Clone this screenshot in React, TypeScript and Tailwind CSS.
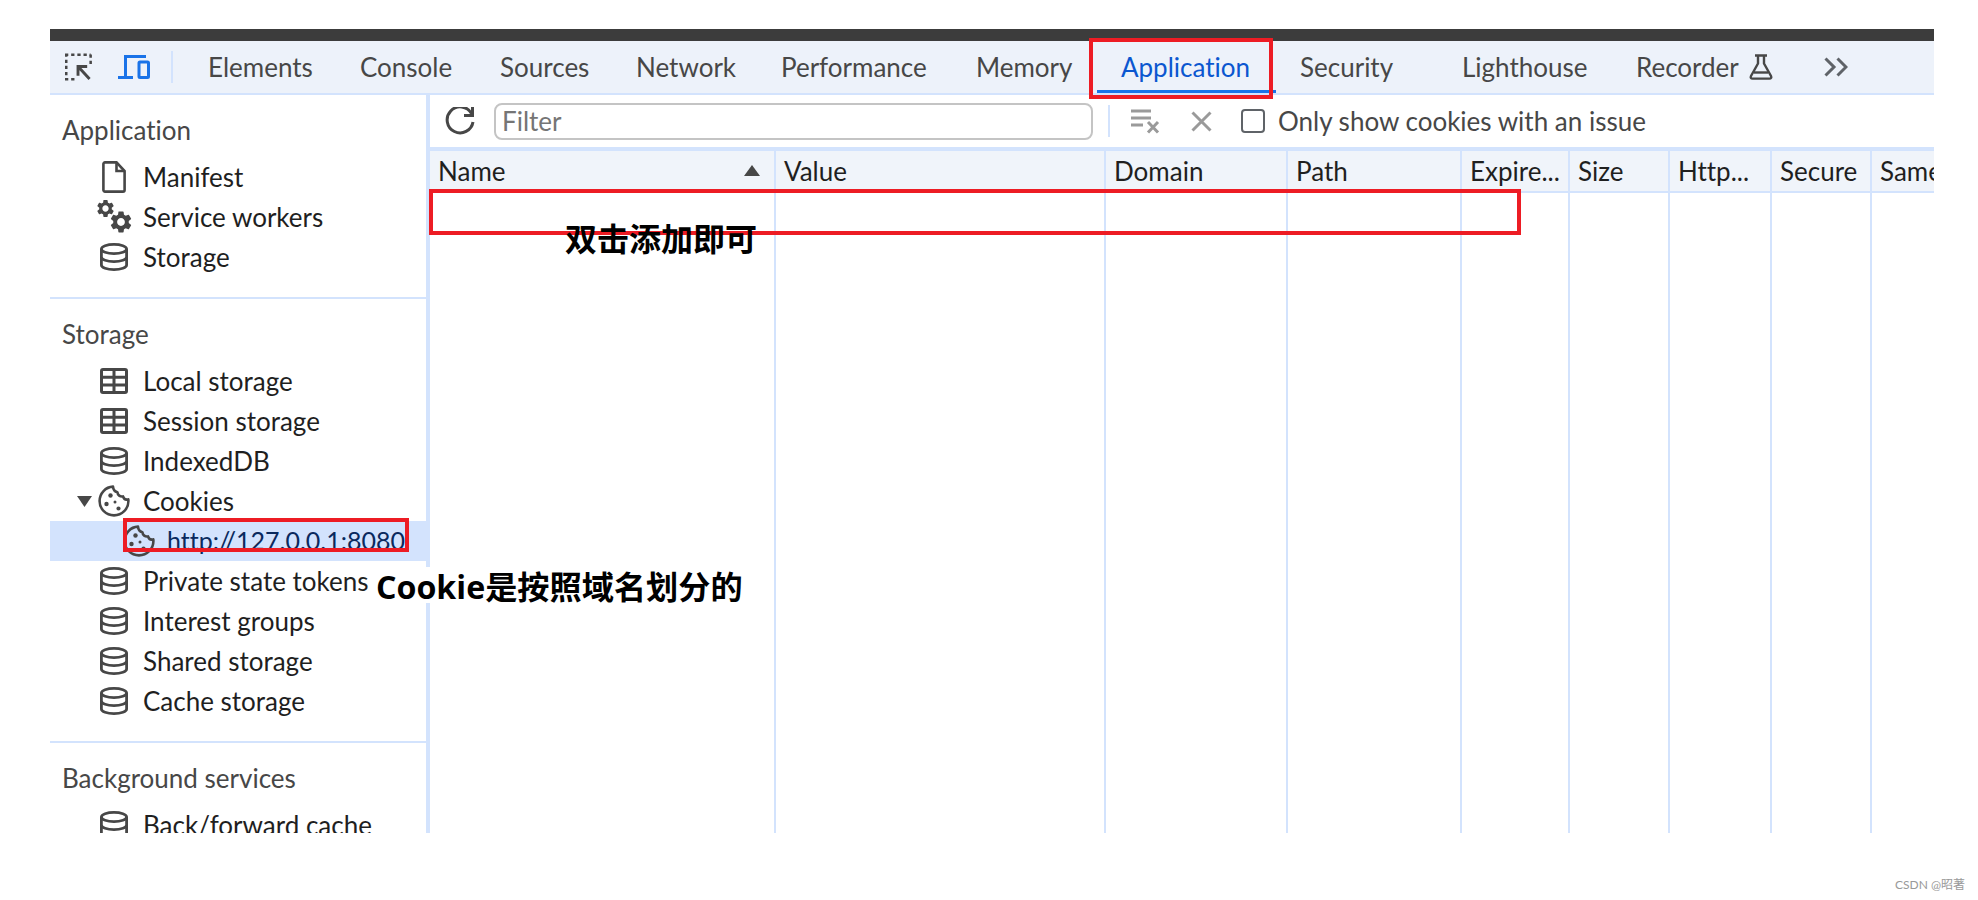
import React from "react";
import { MdSettings } from "react-icons/md";

const ink = "#474747";

function Db() {
  return (
    <svg width="28" height="28" viewBox="0 0 28 28" fill="none" stroke={ink} strokeWidth="2.8">
      <ellipse cx="14" cy="6" rx="12.6" ry="4.6" />
      <path d="M1.4 6v16c0 2.600 5.600 4.600 12.600 4.600s12.600-2 12.600-4.600V6" />
      <path d="M1.400 14c0 2.600 5.600 4.600 12.600 4.600s12.600-2 12.600-4.600" />
    </svg>
  );
}
function Table() {
  return (
    <svg width="28" height="26" viewBox="0 0 28 26" fill="none" stroke={ink} strokeWidth="3">
      <rect x="1.500" y="1.500" width="25" height="23" rx="1.500" />
      <path d="M1.500 9.200h25M1.500 17h25M14 1.500v23" />
    </svg>
  );
}
function Cookie({ size = 32 }: { size?: number }) {
  return (
    <svg width={size} height={size} viewBox="0 0 32 32" fill="none">
      <path d="M15 1.600C7.600 2 1.600 8.200 1.600 16c0 8 6.400 14.400 14.400 14.400S30.400 24 30.400 16c0-.6 0-1-.1-1.600-2.400.6-4.600-.6-5.300-3-2.800.6-5.400-1.200-5.600-4.200C17 6.600 15.200 4.400 15 1.600Z" stroke={ink} strokeWidth="2.600" strokeLinejoin="round" />
      <circle cx="12.500" cy="10.500" r="2.200" fill={ink} />
      <circle cx="8.500" cy="19" r="2.200" fill={ink} />
      <circle cx="17" cy="17" r="1.500" fill={ink} />
      <circle cx="20.500" cy="23.500" r="2.100" fill={ink} />
    </svg>
  );
}
function Page() {
  return (
    <svg width="24" height="32" viewBox="0 0 24 32" fill="none" stroke={ink} strokeWidth="2.600">
      <path d="M3 1.400h11.500L22.600 10v19a1.600 1.600 0 0 1-1.600 1.600H3A1.600 1.600 0 0 1 1.400 29V3A1.600 1.600 0 0 1 3 1.400Z" />
      <path d="M14.500 1.400V10h8" />
    </svg>
  );
}
function Gears() {
  return (
    <div className="relative h-[32px] w-[34px]">
      <MdSettings className="absolute left-[-2px] top-[-3px]" size={21} color={ink} />
      <MdSettings className="absolute left-[11px] top-[8px]" size={26} color={ink} />
    </div>
  );
}

function Row({ icon, label }: { icon: React.ReactNode; label: string }) {
  return (
    <div className="flex h-10 items-center pl-[47px]">
      <div className="flex w-[34px] shrink-0 justify-center">{icon}</div>
      <span className="ml-[12px] whitespace-nowrap text-[26px] text-[#1f1f1f]">{label}</span>
    </div>
  );
}
function Heading({ children }: { children: React.ReactNode }) {
  return <div className="flex h-10 items-center pl-[12px] text-[26px] text-[#474747]">{children}</div>;
}

const tabs: [string, string][] = [
  ["Elements", "w-[152px]"],
  ["Console", "w-[140px]"],
  ["Sources", "w-[136px]"],
  ["Network", "w-[145px]"],
  ["Performance", "w-[195px]"],
  ["Memory", "w-[145px]"],
];

const cols: [string, string][] = [
  ["Name", "w-[346px]"],
  ["Value", "w-[330px]"],
  ["Domain", "w-[182px]"],
  ["Path", "w-[174px]"],
  ["Expire...", "w-[108px]"],
  ["Size", "w-[100px]"],
  ["Http...", "w-[102px]"],
  ["Secure", "w-[100px]"],
  ["Same", "w-[62px]"],
];

export default function App() {
  return (
    <div className="relative h-[900px] w-[1978px] overflow-hidden bg-white pl-[50px] pt-[29px] font-['Lato','Noto_Sans_CJK_SC',sans-serif] [font-variant-ligatures:none]">
      <div className="flex h-[804px] w-[1884px] flex-col overflow-hidden">
        <div className="h-[12px] shrink-0 bg-[#3c3c3c]" />
        {/* main tab bar */}
        <div className="flex h-[54px] shrink-0 items-center border-b-2 border-[#d3e3fd] bg-[#edf2fa]">
          <div className="ml-[15px] flex w-[27px] justify-center">
            <svg width="28" height="28" viewBox="0 0 28 28" fill="none" stroke={ink} strokeWidth="2.600">
              <path d="M0 1.300h26.600M1.300 0v27" strokeDasharray="3.400 3" />
              <path d="M26.600 1v10M0 26.700h10" strokeDasharray="3.400 3" />
              <path d="M14 14l11.500 12.500M13.500 23V13.500H23" strokeWidth="3" />
            </svg>
          </div>
          <div className="ml-[26px] flex w-[32px] justify-center">
            <svg width="32" height="24" viewBox="0 0 32 24" fill="none" stroke="#1a73e8" strokeWidth="3">
              <path d="M28 1.500H7.500V22.500" />
              <path d="M0 22.500h15" />
              <rect x="21" y="7" width="9.500" height="15.500" rx="1" />
            </svg>
          </div>
          <div className="ml-[21px] h-8 w-[2px] bg-[#d3e3fd]" />
          <div className="ml-[11px] flex h-full">
            {tabs.map(([t, w]) => (
              <div key={t} className={`flex h-full items-center pl-6 text-[26px] text-[#474747] ${w}`}>{t}</div>
            ))}
            <div className="flex h-full w-[179px] items-center border-b-[3px] border-[#1a73e8] pl-6 pt-[3px] text-[26px] text-[#0b57d0]">Application</div>
            <div className="flex h-full w-[162px] items-center pl-6 text-[26px] text-[#474747]">Security</div>
            <div className="flex h-full w-[174px] items-center pl-6 text-[26px] text-[#474747]">Lighthouse</div>
            <div className="flex h-full w-[212px] items-center pl-6 text-[26px] text-[#474747]">
              Recorder
              <svg className="ml-[10px]" width="24" height="26" viewBox="0 0 24 26" fill="none" stroke={ink} strokeWidth="2.400">
                <path d="M6 1.500h12M9 1.500v8L2 22c-.8 1.500 0 2.600 1.600 2.600h16.800c1.600 0 2.400-1.100 1.600-2.600L15 9.500v-8" />
                <path d="M5 18.500h14" />
              </svg>
            </div>
            <div className="flex h-full items-center">
              <svg width="24" height="20" viewBox="0 0 24 20" fill="none" stroke="#5f6368" strokeWidth="3">
                <path d="M1.500 1.500 10 10l-8.500 8.500M13.500 1.500 22 10l-8.500 8.500" />
              </svg>
            </div>
          </div>
        </div>

        <div className="flex min-h-0 flex-1">
          {/* sidebar */}
          <div className="h-full w-[380px] shrink-0 overflow-hidden border-r-4 border-[#d3e3fd]">
            <div className="border-b-2 border-[#d3e3fd] pb-[20px] pt-[15px]">
              <div className="mb-[7px]"><Heading>Application</Heading></div>
              <Row icon={<Page />} label="Manifest" />
              <Row icon={<Gears />} label="Service workers" />
              <Row icon={<Db />} label="Storage" />
            </div>
            <div className="border-b-2 border-[#d3e3fd] pb-[20px] pt-[15px]">
              <div className="mb-[7px]"><Heading>Storage</Heading></div>
              <Row icon={<Table />} label="Local storage" />
              <Row icon={<Table />} label="Session storage" />
              <Row icon={<Db />} label="IndexedDB" />
              <div className="flex h-10 items-center pl-[27px]">
                <svg width="15" height="11" viewBox="0 0 15 11"><path d="M0 0h15L7.500 11Z" fill={ink} /></svg>
                <div className="ml-[6px] flex w-[32px] justify-center"><Cookie /></div>
                <span className="ml-[13px] text-[26px] text-[#1f1f1f]">Cookies</span>
              </div>
              <div className="mr-[-4px] flex h-10 items-center bg-[#d3e3fd] pl-[73px]">
                <Cookie />
                <span className="ml-[12px] whitespace-nowrap text-[25px] text-[#0a2a5e]">http://127.0.0.1:8080</span>
              </div>
              <Row icon={<Db />} label="Private state tokens" />
              <Row icon={<Db />} label="Interest groups" />
              <Row icon={<Db />} label="Shared storage" />
              <Row icon={<Db />} label="Cache storage" />
            </div>
            <div className="pt-[15px]">
              <div className="mb-[7px]"><Heading>Background services</Heading></div>
              <Row icon={<Db />} label="Back/forward cache" />
            </div>
          </div>

          {/* main */}
          <div className="flex min-w-0 flex-1 flex-col">
            <div className="flex h-[56px] shrink-0 items-center border-b-4 border-[#d3e3fd] pl-[15px]">
              <svg width="30" height="29" viewBox="0 0 30 29" fill="none" stroke={ink} strokeWidth="3">
                <path d="M26.500 6.500A13 13 0 1 0 28 15" />
                <path d="M27.500 0v8.500H19" />
              </svg>
              <div className="ml-[19px] flex h-[37px] w-[599px] items-center rounded-lg border-2 border-[#c4c4c4] pl-[6px] text-[26px] text-[#757575]">Filter</div>
              <div className="ml-[15px] h-8 w-[2px] bg-[#d3e3fd]" />
              <svg className="ml-[21px]" width="29" height="25" viewBox="0 0 29 25" fill="none" stroke="#9a9a9a" strokeWidth="3">
                <path d="M0 2h20M0 9h20M0 16h12" />
                <path d="M17 13l10 10.500M27 13 17 23.500" />
              </svg>
              <svg className="ml-[31px]" width="21" height="21" viewBox="0 0 21 21" fill="none" stroke="#9a9a9a" strokeWidth="3">
                <path d="M1.500 1.500l18 18M19.500 1.500l-18 18" />
              </svg>
              <div className="ml-[29px] h-[24px] w-[24px] rounded-[4px] border-2 border-[#5f6368]" />
              <span className="ml-[13px] whitespace-nowrap text-[26px] text-[#474747]">Only show cookies with an issue</span>
            </div>
            <div className="flex h-[42px] shrink-0 border-b-2 border-[#d3e3fd] bg-[#f0f4fa]">
              {cols.map(([c, w], i) => (
                <div key={c} className={`relative flex h-full shrink-0 items-center overflow-hidden whitespace-nowrap pl-[8px] text-[26px] text-[#1f1f1f] ${w} ${i === 8 ? "" : "border-r-2 border-[#d3e3fd]"}`}>
                  {c}
                  {i === 0 && (
                    <svg className="absolute right-[14px] top-[14px]" width="16" height="11" viewBox="0 0 16 11"><path d="M8 0 16 11H0Z" fill={ink} /></svg>
                  )}
                </div>
              ))}
            </div>
            <div className="flex min-h-0 flex-1">
              {cols.map(([c, w], i) => (
                <div key={c} className={`h-full shrink-0 ${w} ${i === 8 ? "" : "border-r-2 border-[#d3e3fd]"}`} />
              ))}
            </div>
          </div>
        </div>
      </div>

      {/* annotation overlay */}
      <div className="absolute left-[1089px] top-[38px] h-[61px] w-[184px] border-4 border-[#ed1c24]" />
      <div className="absolute left-[429px] top-[189px] h-[46px] w-[1092px] border-4 border-[#ed1c24]" />
      <div className="absolute left-[123px] top-[518px] h-[34px] w-[286px] border-4 border-[#ed1c24]" />
      <div className="absolute left-[565px] top-[220px] font-['Open_Sans','Noto_Sans_CJK_SC',sans-serif] text-[32px] font-bold leading-[38px] text-black">双击添加即可</div>
      <div className="absolute left-[376px] top-[567px] flex h-[36px] items-center bg-white pt-[4px] font-['Open_Sans','Noto_Sans_CJK_SC',sans-serif] text-[32.2px] font-bold text-black">Cookie是按照域名划分的</div>
      <div className="absolute left-[1895px] top-[877px] text-[12px] leading-4 text-[#999999]">CSDN @昭著</div>
    </div>
  );
}
